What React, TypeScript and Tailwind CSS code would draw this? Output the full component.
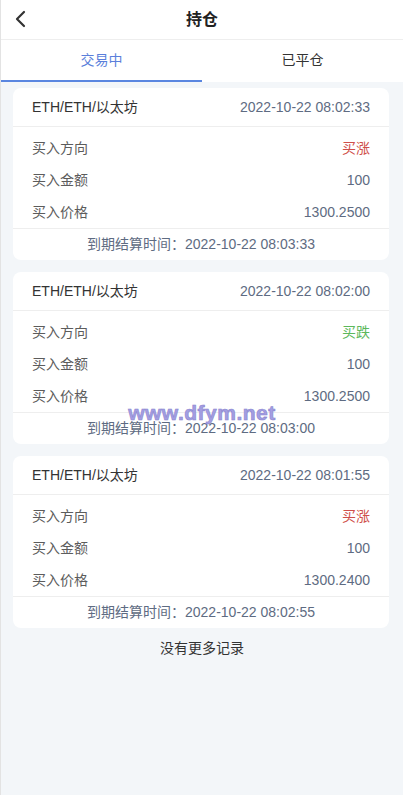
import React, { useState } from 'react';

interface Position {
  pair: string;
  openTime: string;
  direction: 'up' | 'down';
  amount: string;
  price: string;
  settleTime: string;
}

const positions: Position[] = [
  { pair: 'ETH/ETH/以太坊', openTime: '2022-10-22 08:02:33', direction: 'up', amount: '100', price: '1300.2500', settleTime: '2022-10-22 08:03:33' },
  { pair: 'ETH/ETH/以太坊', openTime: '2022-10-22 08:02:00', direction: 'down', amount: '100', price: '1300.2500', settleTime: '2022-10-22 08:03:00' },
  { pair: 'ETH/ETH/以太坊', openTime: '2022-10-22 08:01:55', direction: 'up', amount: '100', price: '1300.2400', settleTime: '2022-10-22 08:02:55' },
];

function PositionCard({ item }: { item: Position }) {
  return (
    <div className="bg-white rounded-[8px]">
      <div className="h-[39px] px-[19px] flex items-center justify-between border-b border-[#eeeeee]">
        <span className="text-[14px] text-[#333333]">{item.pair}</span>
        <span className="text-[14px] text-[#5e6b82]">{item.openTime}</span>
      </div>
      <div className="pt-[5px] px-[19px] border-b border-[#eeeeee]">
        <div className="h-[32px] flex items-center justify-between">
          <span className="text-[14px] text-[#5c5c5c]">买入方向</span>
          {item.direction === 'up' ? (
            <span className="text-[14px] text-[#cf4f4a]">买涨</span>
          ) : (
            <span className="text-[14px] text-[#5cb85c]">买跌</span>
          )}
        </div>
        <div className="h-[32px] flex items-center justify-between">
          <span className="text-[14px] text-[#5c5c5c]">买入金额</span>
          <span className="text-[14px] text-[#5e6b82]">{item.amount}</span>
        </div>
        <div className="h-[32px] flex items-center justify-between">
          <span className="text-[14px] text-[#5c5c5c]">买入价格</span>
          <span className="text-[14px] text-[#5e6b82]">{item.price}</span>
        </div>
      </div>
      <div className="h-[31px] flex items-center justify-center text-[14px] text-[#5e6b82]">
        到期结算时间：{item.settleTime}
      </div>
    </div>
  );
}

export default function App() {
  const [tab, setTab] = useState(0);

  return (
    <div
      className="relative min-h-[795px] bg-[#f3f6f9] border-l border-[#e3e3e3]"
      style={{ fontFamily: '"Liberation Sans", "Noto Sans CJK SC", sans-serif' }}
    >
      <div className="relative h-[40px] bg-white border-b border-[#eeeeee] flex items-center justify-center">
        <button className="absolute left-[10px] top-[9px] w-[20px] h-[20px] flex items-center justify-center">
          <svg width="14" height="20" viewBox="0 0 14 20" fill="none">
            <path d="M10 3 L3 10 L10 17" stroke="#333333" strokeWidth="2.2" strokeLinecap="round" strokeLinejoin="round" />
          </svg>
        </button>
        <h1 className="text-[16px] font-bold text-[#222222]">持仓</h1>
      </div>

      <div className="h-[42px] bg-white flex">
        {['交易中', '已平仓'].map((label, i) => (
          <button
            key={label}
            onClick={() => setTab(i)}
            className={
              i === tab
                ? 'flex-1 flex items-center justify-center text-[14px] text-[#5b7fdb] border-b-2 border-[#5a86e0]'
                : 'flex-1 flex items-center justify-center text-[14px] text-[#333333] border-b-2 border-transparent'
            }
          >
            {label}
          </button>
        ))}
      </div>

      <div className="pt-[6px] pl-[12px] pr-[14px] flex flex-col gap-[12px]">
        {positions.map((p, i) => (
          <PositionCard key={i} item={p} />
        ))}
      </div>

      <p className="mt-[10px] text-center text-[14px] leading-[21px] text-[#333333]">没有更多记录</p>

      {/* watermark overlay */}
      <div className="absolute left-0 right-0 top-[397px] flex justify-center pointer-events-none">
        <span
          className="text-[21px] font-bold text-[#a39ee2] tracking-[0.5px]"
          style={{ WebkitTextStroke: '0.6px #8a85cf' }}
        >
          www.dfym.net
        </span>
      </div>
    </div>
  );
}
